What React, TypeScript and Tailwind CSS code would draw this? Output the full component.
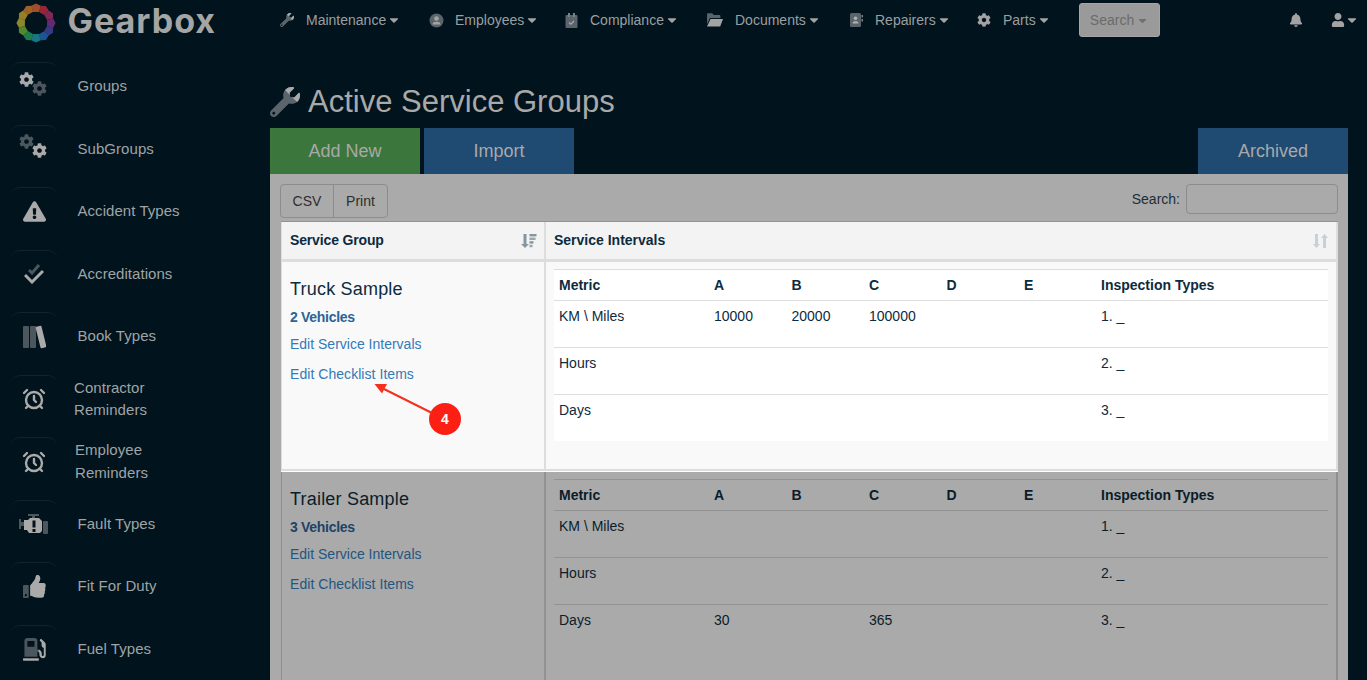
import { AlarmClock } from 'lucide-react'
import {
  FaBell,
  FaCaretDown,
  FaCog,
  FaExclamationTriangle,
  FaGasPump,
  FaThumbsUp,
  FaUser,
  FaWrench,
} from 'react-icons/fa'

const sans = "font-['Liberation_Sans',Arial,sans-serif]"

const logoColors = ['#b5552c', '#a8283a', '#8f2a5a', '#6f2d78', '#3b3f90', '#1f5da0', '#1c8090', '#1f8a55', '#5a9430', '#9a9530', '#a88a2c', '#b06a2a']

function Logo() {
  const pt = (r: number, deg: number) => {
    const a = (deg * Math.PI) / 180
    return `${(20 + r * Math.cos(a)).toFixed(2)} ${(20 + r * Math.sin(a)).toFixed(2)}`
  }
  return (
    <svg width="40" height="40" viewBox="0 0 40 40" className="opacity-90">
      {logoColors.map((color, i) => {
        const a0 = i * 30 - 105
        const a1 = a0 + 30.5
        return (
          <path
            key={color}
            d={`M${pt(11.5, a0)}L${pt(17.8, a0)}L${pt(19.6, a0 + 15)}L${pt(17.8, a1)}L${pt(11.5, a1)}Z`}
            fill={color}
          />
        )
      })}
    </svg>
  )
}

function Gears({ flip }: { flip?: boolean }) {
  return (
    <div className="relative w-[30px] h-[30px]">
      <FaCog size={15} className={`absolute left-0 top-0 ${flip ? 'text-[#4c565d]' : 'text-[#aaaaaa]'}`} />
      <FaCog size={15} className={`absolute left-[13px] top-[9px] ${flip ? 'text-[#aaaaaa]' : 'text-[#4c565d]'}`} />
    </div>
  )
}

function Checks() {
  return (
    <svg width="20" height="20" viewBox="0 0 20 20" fill="none" strokeWidth="3">
      <path d="M5 6l3 3 7-8" stroke="#4c565d" />
      <path d="M1 11l7 7 11-11" stroke="#aaaaaa" />
    </svg>
  )
}

function Books() {
  return (
    <svg width="24" height="24" viewBox="0 0 24 24">
      <rect x="1" y="1" width="6" height="22" rx="1" fill="#4c565d" />
      <rect x="8" y="1" width="6" height="22" rx="1" fill="#4c565d" />
      <rect x="16" y="1" width="6" height="22" rx="1" fill="#aaaaaa" transform="rotate(-14 19 12)" />
    </svg>
  )
}

function Engine() {
  return (
    <svg width="30" height="20" viewBox="0 0 30 20">
      <rect x="9" y="0" width="11" height="2" fill="#4c565d" />
      <rect x="13" y="2" width="3" height="3" fill="#4c565d" />
      <rect x="0" y="5" width="2" height="10" fill="#4c565d" />
      <rect x="2" y="8" width="3" height="4" fill="#4c565d" />
      <path d="M5 6h4l2-2h9l3 3v10l-2 2H10l-2-3H5z" fill="#aaaaaa" />
      <rect x="24" y="7" width="5" height="13" rx="1" fill="#4c565d" />
      <rect x="13.5" y="6.5" width="3" height="7" fill="#01131c" />
      <rect x="13.5" y="15" width="3" height="3" fill="#01131c" />
    </svg>
  )
}

function Thumb() {
  return (
    <div className="relative w-[23px] h-[20px]">
      <FaThumbsUp size={23} className="absolute left-0 -top-[2px] text-[#4c565d]" />
      <FaThumbsUp size={23} className="absolute left-0 -top-[2px] text-[#aaaaaa] [clip-path:polygon(30%_0,100%_0,100%_100%,30%_100%)]" />
    </div>
  )
}

function Pump() {
  return (
    <div className="relative w-[23px] h-[23px]">
      <FaGasPump size={23} className="absolute inset-0 text-[#4c565d]" />
      <FaGasPump size={23} className="absolute inset-0 text-[#aaaaaa] [clip-path:polygon(70%_0,100%_0,100%_100%,0_100%,0_90%,70%_90%)]" />
    </div>
  )
}

function Wrench({ size }: { size: number }) {
  return (
    <div className="relative" style={{ width: size, height: size }}>
      <FaWrench size={size} className="absolute inset-0 text-[#5a646a]" />
      <FaWrench size={size} className="absolute inset-0 text-[#aaaaaa] [clip-path:polygon(38%_0,100%_0,100%_62%)]" />
    </div>
  )
}

function PersonDisc() {
  return (
    <svg width="15" height="15" viewBox="0 0 15 15">
      <circle cx="7.5" cy="7.5" r="7" fill="#5a646a" />
      <circle cx="7.5" cy="5.5" r="2.3" fill="#a3a3a3" />
      <path d="M3.5 11.5c0-2 1.5-2.7 4-2.7s4 .7 4 2.7z" fill="#a3a3a3" />
    </svg>
  )
}

function Calendar() {
  return (
    <svg width="13" height="15" viewBox="0 0 13 15">
      <rect x="0.5" y="2" width="12" height="13" rx="1" fill="#5a646a" />
      <rect x="3" y="0" width="2" height="4" fill="#7b8185" />
      <rect x="8" y="0" width="2" height="4" fill="#7b8185" />
      <path d="M4 9.5l1.8 1.8L9 8" stroke="#b0b0b0" strokeWidth="1.1" fill="none" />
    </svg>
  )
}

function Folder() {
  return (
    <svg width="16" height="14" viewBox="0 0 16 14">
      <path d="M0 1.5C0 .7.5.2 1.2.2h4l1.5 1.8h5.5c.7 0 1.2.5 1.2 1.2V5H3L0 11z" fill="#5a646a" />
      <path d="M3.5 6H16l-2.8 7.5H0z" fill="#a3a3a3" />
    </svg>
  )
}

function Contact() {
  return (
    <svg width="13" height="14" viewBox="0 0 13 14">
      <rect x="0" y="0" width="11" height="14" rx="1.5" fill="#5a646a" />
      <rect x="11.5" y="2" width="1.5" height="2.5" fill="#7b8185" />
      <rect x="11.5" y="6" width="1.5" height="2.5" fill="#7b8185" />
      <circle cx="5.5" cy="5.2" r="1.8" fill="#b0b0b0" />
      <path d="M2.5 10.5c0-1.6 1.2-2.2 3-2.2s3 .6 3 2.2z" fill="#b0b0b0" />
    </svg>
  )
}

const sideItems = [
  { label: ['Groups'], icon: <Gears />, textClass: 'ml-[19.5px]' },
  { label: ['SubGroups'], icon: <Gears flip />, textClass: 'ml-[19.5px]' },
  { label: ['Accident Types'], icon: <FaExclamationTriangle size={23} className="text-[#aaaaaa]" />, textClass: 'ml-[19.5px]' },
  { label: ['Accreditations'], icon: <Checks />, textClass: 'ml-[19.5px]' },
  { label: ['Book Types'], icon: <Books />, textClass: 'ml-[19.5px]' },
  { label: ['Contractor', 'Reminders'], icon: <AlarmClock size={24} strokeWidth={2.4} className="text-[#aaaaaa]" />, textClass: 'ml-[16px]' },
  { label: ['Employee', 'Reminders'], icon: <AlarmClock size={24} strokeWidth={2.4} className="text-[#aaaaaa]" />, textClass: 'ml-[17px]' },
  { label: ['Fault Types'], icon: <Engine />, textClass: 'ml-[19.5px]' },
  { label: ['Fit For Duty'], icon: <Thumb />, textClass: 'ml-[19.5px]' },
  { label: ['Fuel Types'], icon: <Pump />, textClass: 'ml-[19.5px]' },
]

function Sidebar() {
  return (
    <aside className="w-[270px] shrink-0 pl-[10px] pt-[0.25px]">
      <div className="flex flex-col">
        {sideItems.map((item) => (
          <div key={item.label[0]} className="flex items-center h-[62.5px]">
            <div className="w-[48px] h-[48px] shrink-0 rounded-t-[10px] border-t border-[#0e2431] flex items-center justify-center -mt-[1px]">
              {item.icon}
            </div>
            <div className={`${item.textClass} text-[15px] leading-[22.5px] text-[#9fa4a7] tracking-[0.05px]`}>
              {item.label.map((l) => (
                <div key={l}>{l}</div>
              ))}
            </div>
          </div>
        ))}
      </div>
    </aside>
  )
}

const navItems = [
  { label: 'Maintenance', width: 'w-[149px]', gap: 'w-[26px]', icon: <Wrench size={14} /> },
  { label: 'Employees', width: 'w-[136px]', gap: 'w-[26px]', icon: <PersonDisc /> },
  { label: 'Compliance', width: 'w-[142px]', gap: 'w-[25px]', icon: <Calendar /> },
  { label: 'Documents', width: 'w-[143px]', gap: 'w-[28px]', icon: <Folder /> },
  { label: 'Repairers', width: 'w-[127px]', gap: 'w-[25px]', icon: <Contact /> },
  { label: 'Parts', width: 'w-[102px]', gap: 'w-[26px]', icon: <FaCog size={14} className="text-[#a3a3a3]" /> },
]

function TopBar() {
  return (
    <header className="h-[40px] flex items-center shrink-0">
      <div className="w-[280px] h-[40px] shrink-0 flex items-start pl-[15.5px]">
        <div className="mt-[3px]">
          <Logo />
        </div>
        <span className="ml-[12px] mt-[2px] font-['Inter',sans-serif] font-bold text-[34px] leading-[38px] text-[#a5a5a5] tracking-[1px]">
          Gearbox
        </span>
      </div>
      <nav className="flex items-center text-[14px] text-[#9a9fa2]">
        {navItems.map((item) => (
          <div key={item.label} className={`${item.width} flex items-center shrink-0`}>
            <div className={item.gap}>{item.icon}</div>
            <span>{item.label}</span>
            <FaCaretDown size={14} className="ml-[1px] text-[#a3a3a3]" />
          </div>
        ))}
        <button className="w-[81px] h-[34px] rounded-[3px] bg-[#9a9a9a] border border-[#a6a6a6] text-[#6b6b6b] flex items-center justify-center">
          Search
          <FaCaretDown size={13} className="ml-[2px] text-[#6f6f6f]" />
        </button>
      </nav>
      <div className="ml-auto flex items-center pr-[8px] text-[#a3a3a3]">
        <FaBell size={14} />
        <FaUser size={14} className="ml-[28px]" />
        <FaCaretDown size={14} />
      </div>
    </header>
  )
}

function SortAmount() {
  return (
    <svg width="16" height="16" viewBox="0 0 16 16" fill="#86969f">
      <path d="M2.5 1h3v10H8l-4 4-4-4h2.5z" />
      <rect x="8.5" y="1" width="7" height="2.4" />
      <rect x="8.5" y="4.6" width="6" height="2.4" opacity="0.85" />
      <rect x="8.5" y="8.2" width="4" height="2.4" />
      <rect x="8.5" y="11.8" width="3" height="2.4" opacity="0.85" />
    </svg>
  )
}

function SortBoth() {
  return (
    <svg width="15" height="16" viewBox="0 0 15 16" fill="#c6d0d6">
      <path d="M2 1h3v10h2l-3.5 4L0 11h2z" />
      <path d="M10 15h3V5h2l-3.5-4L8 5h2z" />
    </svg>
  )
}

function Row({ cells, header }: { cells: string[]; header?: boolean }) {
  return (
    <div
      className={
        header
          ? 'grid grid-cols-[155px_77.5px_77.5px_77.5px_77.5px_77px_1fr] h-[32px] items-center border-t border-b border-inherit font-bold'
          : 'grid grid-cols-[155px_77.5px_77.5px_77.5px_77.5px_77px_1fr] h-[47px] last:h-[46px] pt-[5px] border-b border-inherit last:border-b-0'
      }
    >
      {cells.map((c, i) => (
        <div key={i} className="pl-[5px]">
          {c}
        </div>
      ))}
    </div>
  )
}

const metricHead = ['Metric', 'A', 'B', 'C', 'D', 'E', 'Inspection Types']

function ServiceRow({
  name,
  vehicles,
  rows,
  active,
}: {
  name: string
  vehicles: string
  rows: string[][]
  active?: boolean
}) {
  return (
    <div
      className={
        active
          ? 'flex h-[209px] mb-[1px] bg-[#f9f9f9] border-l border-r-2 border-b-2 border-[#dddddd] text-[#0d2b3e]'
          : 'flex h-[210px] bg-[#aaaaaa] border-l border-r-2 border-[#8f8f8f] text-[#091d2a]'
      }
    >
      <div className={`w-[264px] shrink-0 pl-[8px] pt-[15px] border-r-2 ${active ? 'border-[#dddddd]' : 'border-[#939393]'}`}>
        <div className="text-[18px] leading-[25px] tracking-[0.2px]">{name}</div>
        <div className={`mt-[5px] text-[14px] leading-[20px] font-bold tracking-[-0.3px] ${active ? 'text-[#2a6496]' : 'text-[#1d4468]'}`}>
          {vehicles}
        </div>
        <div className={`mt-[7px] text-[14px] leading-[20px] ${active ? 'text-[#337ab7]' : 'text-[#23557f]'}`}>
          Edit Service Intervals
        </div>
        <div className={`mt-[10px] text-[14px] leading-[20px] tracking-[0.05px] ${active ? 'text-[#337ab7]' : 'text-[#23557f]'}`}>
          Edit Checklist Items
        </div>
      </div>
      <div className="flex-1 pl-[8px] pr-[8px] pt-[7px]">
        <div className={`text-[14px] ${active ? 'bg-white border-[#dddddd]' : 'border-[#939393]'}`}>
          <Row cells={metricHead} header />
          {rows.map((r) => (
            <Row key={r[0]} cells={r} />
          ))}
        </div>
      </div>
    </div>
  )
}

function Panel() {
  return (
    <section className="bg-[#aaaaaa] px-[10px] pt-[10px] mr-[19px] text-[14px]">
      <div className="flex justify-between h-[37px]">
        <div className="flex h-[34px] text-[#2e2e2e] border border-[#8c8c8c] rounded-[4px]">
          <div className="w-[53px] flex items-center justify-center border-r border-[#8c8c8c]">CSV</div>
          <div className="w-[53px] flex items-center justify-center">Print</div>
        </div>
        <div className="flex items-center h-[30px] text-[#1b2f3b]">
          Search:
          <div className="ml-[6px] w-[152px] h-[30px] border border-[#8c8c8c] rounded-[4px]" />
        </div>
      </div>
      <div className="ml-[1px] border-t border-[#939393] bg-white">
        <div className="flex h-[40px] bg-[#f3f3f3] border-l border-r-2 border-b-[3px] border-[#dddddd] text-[#0d2b3e] font-bold">
          <div className="w-[264px] shrink-0 pl-[8px] pr-[7px] flex items-center justify-between border-r-2 border-[#dddddd]">
            <span className="tracking-[-0.15px]">Service Group</span>
            <SortAmount />
          </div>
          <div className="flex-1 pl-[8px] pr-[8px] flex items-center justify-between">
            Service Intervals
            <SortBoth />
          </div>
        </div>
        <ServiceRow
          active
          name="Truck Sample"
          vehicles="2 Vehicles"
          rows={[
            ['KM \\ Miles', '10000', '20000', '100000', '', '', '1. _'],
            ['Hours', '', '', '', '', '', '2. _'],
            ['Days', '', '', '', '', '', '3. _'],
          ]}
        />
        <ServiceRow
          name="Trailer Sample"
          vehicles="3 Vehicles"
          rows={[
            ['KM \\ Miles', '', '', '', '', '', '1. _'],
            ['Hours', '', '', '', '', '', '2. _'],
            ['Days', '30', '', '365', '', '', '3. _'],
          ]}
        />
      </div>
    </section>
  )
}

export default function App() {
  return (
    <div className={`${sans} relative h-[680px] overflow-hidden bg-[#01131c] flex flex-col`}>
      <TopBar />
      <div className="flex flex-1 min-h-0 pt-[15px]">
        <Sidebar />
        <main className="flex-1 min-w-0 -mt-[15px]">
          <div className="h-[88px] pt-[35px] flex items-center text-[#a9a9a9]">
            <div className="mr-[8px]">
              <Wrench size={30} />
            </div>
            <h1 className="text-[31px] leading-[36px]">Active Service Groups</h1>
          </div>
          <div className="flex gap-[4px] pr-[19px] text-[18px] text-[#a9a9a9]">
            <div className="w-[150px] h-[46px] bg-[#3b763d] flex items-center justify-center">Add New</div>
            <div className="w-[150px] h-[46px] bg-[#1f4a72] flex items-center justify-center">Import</div>
            <div className="ml-auto w-[150px] h-[46px] bg-[#1f4a72] flex items-center justify-center">Archived</div>
          </div>
          <Panel />
        </main>
      </div>
      {/* callout over the table */}
      <div className="absolute left-[429px] top-[403px] w-[32px] h-[32px] rounded-full bg-[#fb1f14] text-white font-bold text-[14px] flex items-center justify-center">
        4
      </div>
      <svg className="absolute left-[370px] top-[380px]" width="70" height="40" viewBox="0 0 70 40">
        <line x1="62" y1="33" x2="14" y2="9" stroke="#f5301f" strokeWidth="2" />
        <polygon points="4.5,4 17,4 12,13.5" fill="#f5301f" />
      </svg>
    </div>
  )
}
